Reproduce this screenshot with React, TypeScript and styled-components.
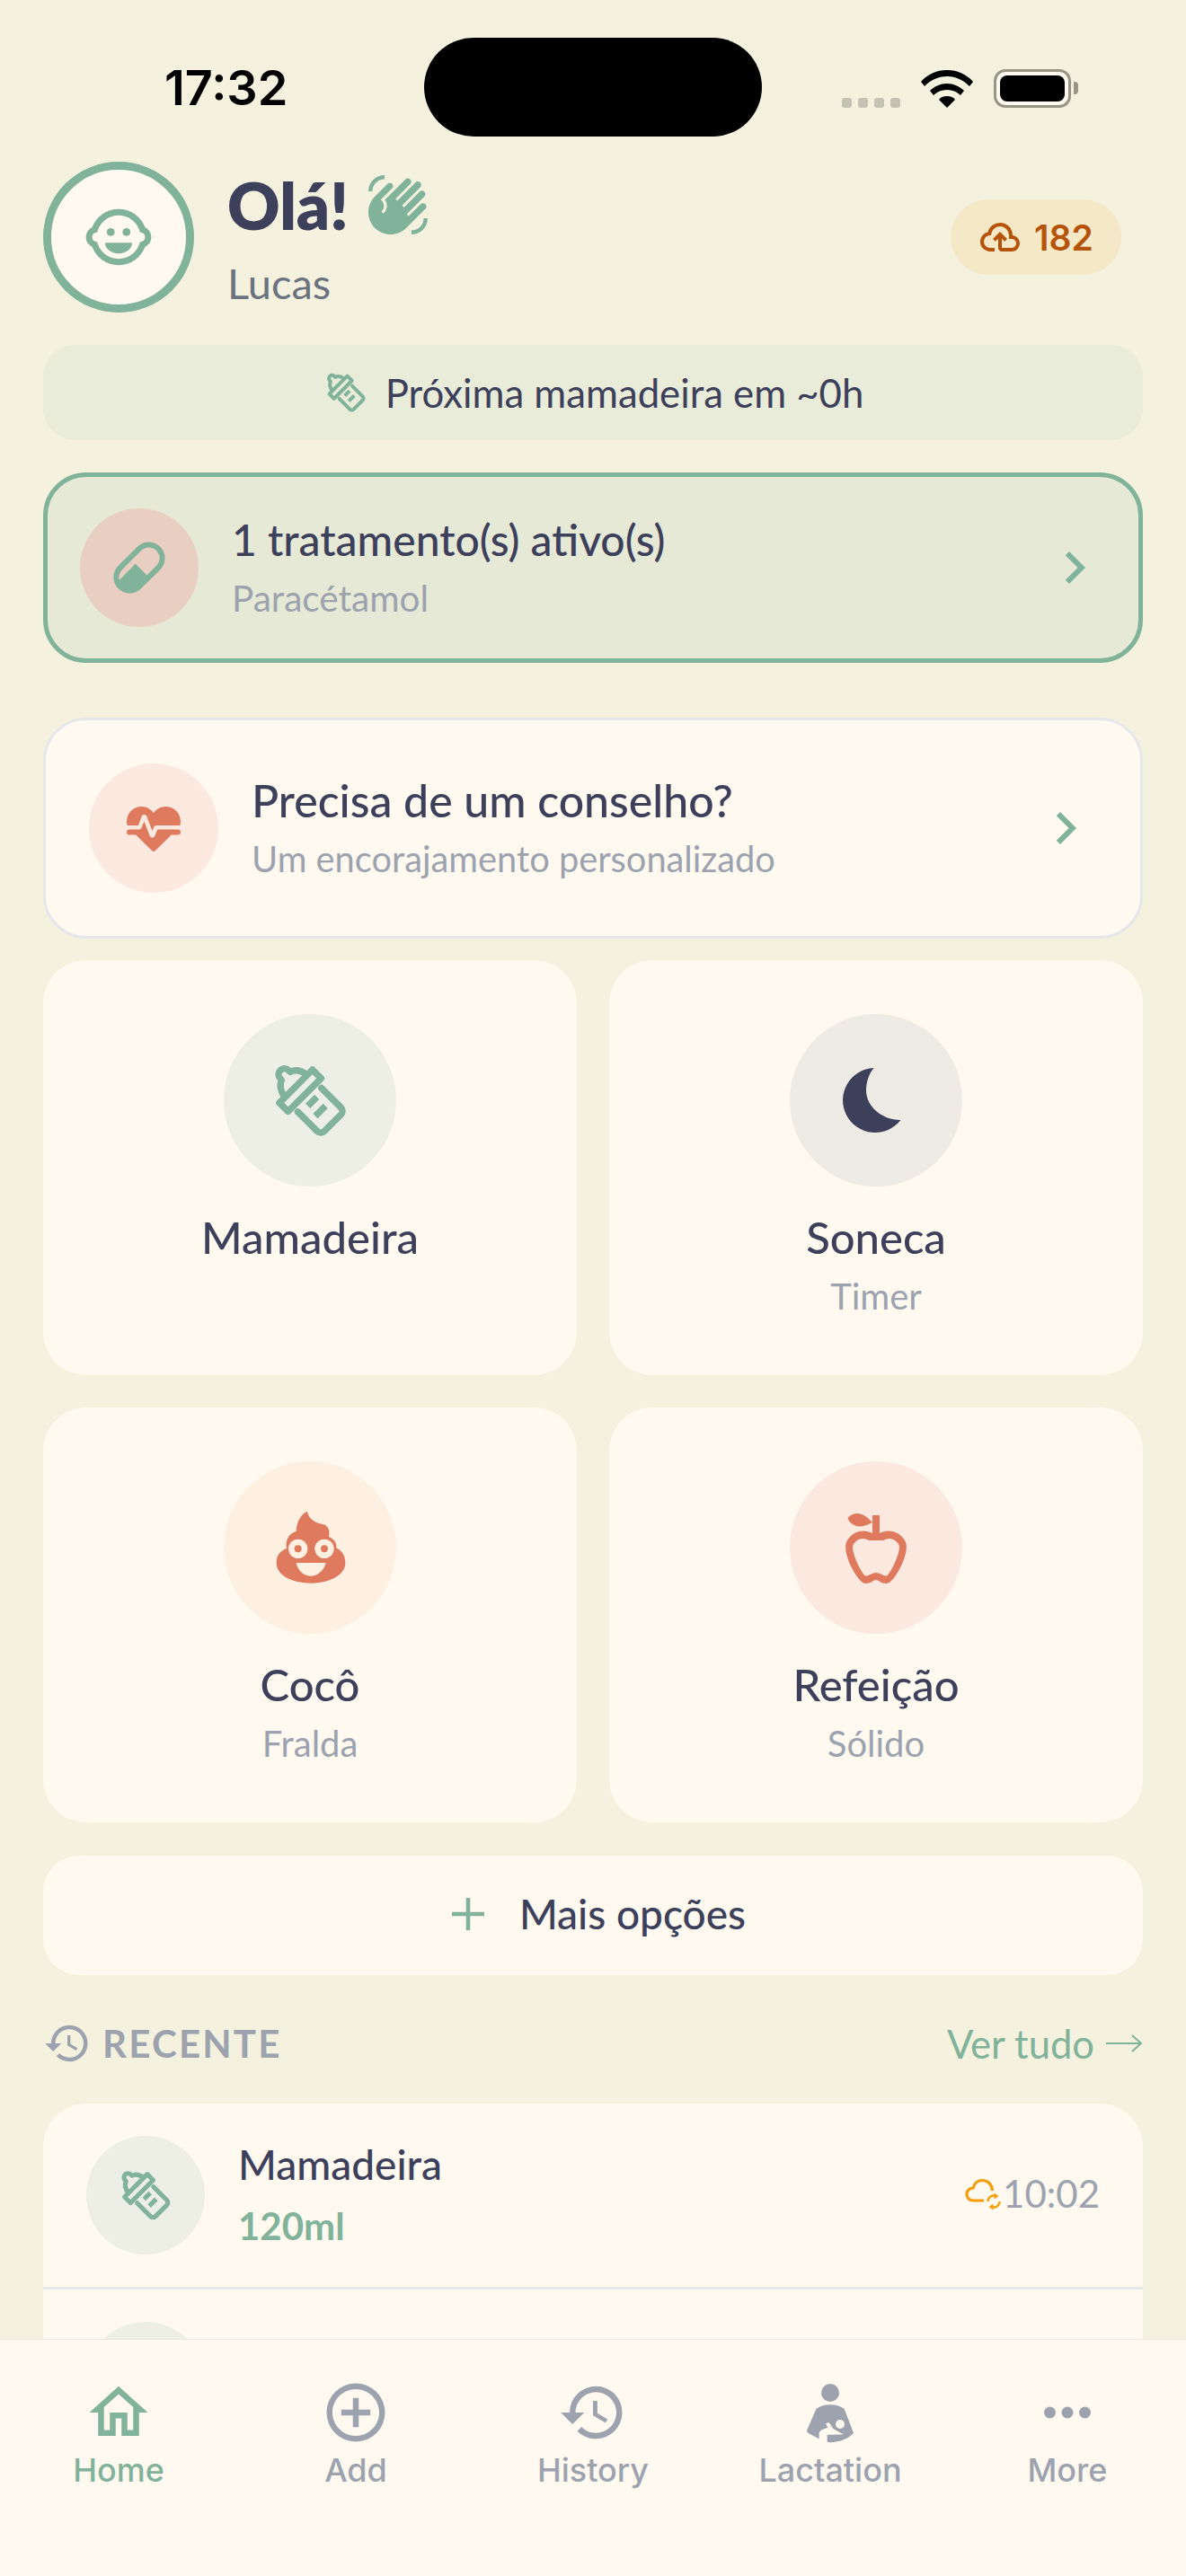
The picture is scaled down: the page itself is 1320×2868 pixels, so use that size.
import React from "react";
import styled, { createGlobalStyle } from "styled-components";

const GREEN = "#81b29a";
const DARK = "#3d405b";
const CORAL = "#e07a5f";
const GRAY = "#9ca3af";
const CARD = "#fff9f0";
const FONT = `"Lato", "Noto Sans", sans-serif`;

const GlobalStyle = createGlobalStyle`
  html, body {
    margin: 0;
    padding: 0;
    background: #f4f1de;
  }
  * { box-sizing: border-box; }
`;

// icones
const Icon: React.FC<{ size: number; color: string; d: string; evenodd?: boolean }> = ({ size, color, d, evenodd }) => (
  <svg width={size} height={size} viewBox="0 0 24 24" fill={color} fillRule={evenodd ? "evenodd" : "nonzero"}>
    <path d={d} />
  </svg>
);

const paths = {
  chevron: "M8.59,16.58L13.17,12L8.59,7.41L10,6L16,12L10,18L8.59,16.58Z",
  pill: "M4.22,11.29L11.29,4.22C13.64,1.88 17.43,1.88 19.78,4.22C22.12,6.56 22.12,10.36 19.78,12.71L12.71,19.78C10.36,22.12 6.56,22.12 4.22,19.78C1.88,17.43 1.88,13.64 4.22,11.29M5.64,12.71C4.59,13.75 4.24,15.24 4.6,16.57L10.59,10.59L14.83,14.83L18.36,11.29C19.93,9.73 19.93,7.2 18.36,5.64C16.8,4.07 14.27,4.07 12.71,5.64L5.64,12.71Z",
  heartPulse: "M7.5,4A5.5,5.5 0 0,0 2,9.5C2,10 2.09,10.5 2.22,11H6.3L7.57,7.63C7.87,6.83 9.05,6.75 9.43,7.63L11.5,13L12.09,11.58C12.22,11.25 12.57,11 13,11H21.78C21.91,10.5 22,10 22,9.5A5.5,5.5 0 0,0 16.5,4C14.64,4 13,4.93 12,6.34C11,4.93 9.36,4 7.5,4M3,12.5A1,1 0 0,0 2,13.5A1,1 0 0,0 3,14.5H5.44L11,20C12,20.9 12,20.9 13,20L18.56,14.5H21A1,1 0 0,0 22,13.5A1,1 0 0,0 21,12.5H13.4L12.47,14.8C12.07,15.81 10.92,15.67 10.55,14.83L8.5,9.5L7.54,11.83C7.39,12.21 7.05,12.5 6.6,12.5H3Z",
  apple: "M20,10C22,13 17,22 15,22C13,22 13,21 12,21C11,21 11,22 9,22C7,22 2,13 4,10C6,7 9,7 11,8V5C5.38,8.07 4.11,3.78 4.11,3.78C4.11,3.78 6.77,0.19 11,5V3H13V8C15,7 18,7 20,10ZM18.33 11.11C17.26 9.5 15.89 9 13.89 10H10.11C8.11 9 6.74 9.5 5.67 11.11C4.8 12.4 7.5 18.5 9 19.9C10 19.9 11 19 12 19C13 19 14 19.9 15 19.9C16.5 18.5 19.2 12.4 18.33 11.11Z",
  cloudUp: "M6.5 20Q4.22 20 2.61 18.43 1 16.85 1 14.58 1 12.63 2.17 11.1 3.35 9.57 5.25 9.15 5.88 6.85 7.75 5.43 9.63 4 12 4 14.93 4 16.96 6.04 19 8.07 19 11 20.73 11.2 21.86 12.5 23 13.78 23 15.5 23 17.38 21.69 18.69 20.38 20 18.5 20H13Q12.18 20 11.59 19.41 11 18.83 11 18V12.85L9.4 14.4L8 13L12 9L16 13L14.6 14.4L13 12.85V18H18.5Q19.55 18 20.27 17.27 21 16.55 21 15.5 21 14.45 20.27 13.73 19.55 13 18.5 13H17V11Q17 8.93 15.54 7.46 14.08 6 12 6 9.93 6 8.46 7.46 7 8.93 7 11H6.5Q5.05 11 4.03 12.03 3 13.05 3 14.5 3 15.95 4.03 17 5.05 18 6.5 18H9V20Z",
  hand: "M23 17C23 20.31 20.31 23 17 23V21.5C19.5 21.5 21.5 19.5 21.5 17H23M1 7C1 3.69 3.69 1 7 1V2.5C4.5 2.5 2.5 4.5 2.5 7H1M8 4.32L3.41 8.92C.19 12.14 .19 17.37 3.41 20.59S11.86 23.81 15.08 20.59L22.15 13.5C22.64 13.03 22.64 12.24 22.15 11.75C21.66 11.26 20.87 11.26 20.38 11.75L15.96 16.17L15.25 15.46L21.79 8.92C22.28 8.43 22.28 7.64 21.79 7.15S20.5 6.66 20 7.15L14.19 13L13.5 12.27L20.25 5.5C20.74 5 20.74 4.22 20.25 3.73S19 3.24 18.5 3.73L11.75 10.5L11.05 9.8L16.5 4.32C17 3.83 17 3.04 16.5 2.55S15.22 2.06 14.73 2.55L7.11 10.17C8.33 11.74 8.08 14 6.5 15.23L5.8 14.5C7 13.5 7.1 11.6 5.9 10.4L5.6 10.1L9.77 5.95C10.26 5.46 10.26 4.67 9.77 4.18S8.49 3.83 8 4.32Z",
  home: "M12 5.69L17 10.19V18H15V12H9V18H7V10.19L12 5.69M12 3L2 12H5V20H11V14H13V20H19V12H22",
  plusCircle: "M12,20C7.59,20 4,16.41 4,12C4,7.59 7.59,4 12,4C16.41,4 20,7.59 20,12C20,16.41 16.41,20 12,20M12,2A10,10 0 0,0 2,12A10,10 0 0,0 12,22A10,10 0 0,0 22,12A10,10 0 0,0 12,2M13,7H11V11H7V13H11V17H13V13H17V11H13V7Z",
  history: "M13.5,8H12V13L16.28,15.54L17,14.33L13.5,12.25V8M13,3A9,9 0 0,0 4,12H1L4.96,16.03L9,12H6A7,7 0 0,1 13,5A7,7 0 0,1 20,12A7,7 0 0,1 13,19C11.07,19 9.32,18.21 8.06,16.94L6.64,18.36C8.27,20 10.5,21 13,21A9,9 0 0,0 22,12A9,9 0 0,0 13,3",
  dots: "M16,12A2,2 0 0,1 18,10A2,2 0 0,1 20,12A2,2 0 0,1 18,14A2,2 0 0,1 16,12M10,12A2,2 0 0,1 12,10A2,2 0 0,1 14,12A2,2 0 0,1 12,14A2,2 0 0,1 10,12M4,12A2,2 0 0,1 6,10A2,2 0 0,1 8,12A2,2 0 0,1 6,14A2,2 0 0,1 4,12Z",
};

const Bottle: React.FC<{ size: number }> = ({ size }) => (
  <svg width={size} height={size} viewBox="0 0 24 24" fill="none" stroke={GREEN} strokeWidth={1.85} strokeLinejoin="round" strokeLinecap="round">
    <path d="M8.6 15.2L14 20.6a1.4 1.4 0 0 0 2 0L20.6 16a1.4 1.4 0 0 0 0-2L15.2 8.6" />
    <path d="M3.5 12.7L12.7 3.5L15.1 5.9L5.9 15.1Z" />
    <path d="M4.9 11C3.7 9.2 3.5 7.6 4.1 6.4L3.7 5.9A1.6 1.6 0 0 1 6.1 3.7L6.5 4.1C7.8 3.4 9.4 3.6 11 4.8" />
    <path d="M11.4 13.6L13.9 11.1M13.5 16.4L16.3 13.6" strokeLinecap="butt" />
  </svg>
);

const BabyFace: React.FC<{ size: number }> = ({ size }) => (
  <svg width={size} height={size} viewBox="0 0 24 24" fill={GREEN}>
    <path
      d="M4.4 9.6A8 8 0 0 1 19.6 9.6A2.5 2.5 0 0 1 19.6 14.4A8 8 0 0 1 4.4 14.4A2.5 2.5 0 0 1 4.4 9.6Z"
      fill="none"
      stroke={GREEN}
      strokeWidth={2}
    />
    <circle cx={9.5} cy={10.4} r={1.25} />
    <circle cx={14.5} cy={10.4} r={1.25} />
    <path d="M7.7 13.8H16.3A4.3 3.4 0 0 1 7.7 13.8Z" />
  </svg>
);

const Moon: React.FC<{ size: number }> = ({ size }) => (
  <svg width={size} height={size} viewBox="0 0 96 96" fill={DARK}>
    <path d="M45.5 12A36 36 0 1 0 75.5 70C55 70 37 55 37 37C37 28 40 19 45.5 12Z" />
  </svg>
);

const Poop: React.FC<{ size: number }> = ({ size }) => (
  <svg width={size} height={size} viewBox="0 0 288 288">
    <path
      fill={CORAL}
      d="M135 23C140 50 160 60 190 67C205 72 212 90 207 108C225 115 234 130 232 145C250 155 262 170 262 195C262 240 200 263 150 263C90 263 32 240 32 195C32 170 45 155 66 147C60 120 75 95 98 90C98 60 115 30 135 23Z"
    />
    <circle cx={104} cy={148} r={32} fill="#fdf0e0" />
    <circle cx={192} cy={148} r={32} fill="#fdf0e0" />
    <circle cx={104} cy={148} r={12} fill={CORAL} />
    <circle cx={192} cy={148} r={12} fill={CORAL} />
    <path fill="#fdf0e0" d="M98 195H197C190 225 165 239 147 239C125 239 105 225 98 195Z" />
  </svg>
);

const MotherNurse: React.FC<{ size: number }> = ({ size }) => (
  <svg width={size} height={size} viewBox="-9 -9 234 234">
    <circle cx={108} cy={42} r={30} fill={GRAY} />
    <path
      fill={GRAY}
      d="M108 82C88 82 72 87 61 96L31 166C29 171 31 175 36 177C60 190 90 208 108 208C140 206 170 195 186 176L155 96C144 87 128 82 108 82Z"
    />
    <path
      fill={CARD}
      d="M71 212V178C71 168 84 164 100 158L93 145L104 141L118 162L146 178L154 180C140 182 115 182 98 182V212Z"
    />
    <circle cx={141} cy={147} r={15} fill={CARD} />
  </svg>
);

const CloudSync = () => (
  <svg width={42} height={42} viewBox="0 0 42 42" fill="none" stroke="#f59e0b" strokeWidth={3.2}>
    <path d="M21 26H9C5 26 2 23 2 19C2 15 5 12 9 12C10.5 6.5 14.5 3.5 19.5 3.5C25.5 3.5 30 8 30.5 15" />
    <path d="M25.5 27A6.5 6.5 0 0 1 34.5 21M38.5 27A6.5 6.5 0 0 1 29.5 33" strokeWidth={2.4} />
    <path d="M32.5 17.5L37.5 21L32.5 24.5ZM31.5 36.5L26.5 33L31.5 29.5Z" fill="#f59e0b" stroke="none" />
  </svg>
);

const WifiGlyph = () => (
  <svg width={58} height={42} viewBox="0 0 58 42" fill="#000">
    <path d="M29 0C18 0 8 4 0 13L4 18C11 11 19 7 29 7S47 11 54 18L58 13C50 4 40 0 29 0Z" />
    <path d="M29 15C22 15 15 18 10 23L14 28C18 24 23 22 29 22S40 24 44 28L48 23C43 18 36 15 29 15Z" />
    <path d="M29 29C25 29 22 30 20 33L29 42L38 33C36 30 33 29 29 29Z" />
  </svg>
);

const Page = styled.div`
  width: 1320px;
  height: 2868px;
  display: flex;
  flex-direction: column;
  overflow: hidden;
  background: #f4f1de;
  font-family: ${FONT};
  color: ${DARK};
`;

const StatusBar = styled.div`
  height: 180px;
  flex: none;
  display: flex;
  align-items: flex-start;
  padding-top: 42px;
`;

const Clock = styled.div`
  width: 472px;
  padding: 26px 0 0 183px;
  font-family: "Inter", sans-serif;
  font-weight: 600;
  font-size: 54px;
  line-height: 60px;
  color: #000;
`;

const Island = styled.div`
  width: 376px;
  height: 110px;
  border-radius: 55px;
  background: #000;
`;

const StatusIcons = styled.div`
  display: flex;
  align-items: flex-end;
  padding: 35px 0 0 89px;
`;

const SignalDots = styled.div`
  display: flex;
  gap: 7px;
  margin-right: 23px;
`;

const SignalDot = styled.div`
  width: 11px;
  height: 11px;
  border-radius: 3px;
  background: #c4c2b2;
`;

const Battery = styled.div`
  width: 86px;
  height: 43px;
  margin-left: 23px;
  padding: 4px;
  border: 3px solid #979685;
  border-radius: 13px;
  background: #fff9f0;
  position: relative;

  &::after {
    content: "";
    position: absolute;
    right: -11px;
    top: 11px;
    width: 5px;
    height: 14px;
    border-radius: 0 4px 4px 0;
    background: #979685;
  }
`;

const BatteryFill = styled.div`
  height: 100%;
  border-radius: 8px;
  background: #000;
`;

const Content = styled.div`
  flex: 1;
  min-height: 0;
  overflow: hidden;
  padding: 0 48px;
  display: flex;
  flex-direction: column;
`;

const Header = styled.div`
  display: flex;
  align-items: center;
  height: 168px;
  flex: none;
`;

const Avatar = styled.div`
  width: 168px;
  height: 168px;
  flex: none;
  border-radius: 50%;
  border: 9px solid ${GREEN};
  background: ${CARD};
  display: flex;
  align-items: center;
  justify-content: center;
`;

const Greeting = styled.div`
  margin-left: 37px;
  flex: 1;
`;

const GreetingLine = styled.div`
  display: flex;
  align-items: center;
  gap: 19px;
  font-size: 72px;
  font-weight: 800;
  line-height: 90px;
`;

const BabyName = styled.div`
  font-size: 47px;
  line-height: 60px;
  margin-top: 12px;
  color: #6b7280;
`;

const SyncChip = styled.div`
  width: 190px;
  height: 84px;
  margin-right: 24px;
  border-radius: 42px;
  background: #f5e8c7;
  display: flex;
  align-items: center;
  justify-content: center;
  gap: 14px;
  font-family: "Inter", sans-serif;
  font-size: 39px;
  font-weight: 600;
  color: #b45309;
`;

const Banner = styled.div`
  margin-top: 36px;
  height: 106px;
  flex: none;
  border-radius: 36px;
  background: #e9ecd8;
  display: flex;
  align-items: center;
  justify-content: center;
  gap: 18px;
  font-size: 43.7px;
`;

const TreatmentCard = styled.div`
  margin-top: 36px;
  height: 212px;
  flex: none;
  border: 5px solid ${GREEN};
  border-radius: 48px;
  background: #e6e9d6;
  display: flex;
  align-items: center;
  padding: 0 35px 0 36px;
`;

const AdviceCard = styled.div`
  margin-top: 61px;
  height: 246px;
  flex: none;
  border: 3px solid #e5e7eb;
  border-radius: 48px;
  background: ${CARD};
  display: flex;
  align-items: center;
  padding: 0 47px 0 48px;
`;

const RoundIcon = styled.div<{ $size: number; $bg: string }>`
  width: ${(p) => p.$size}px;
  height: ${(p) => p.$size}px;
  flex: none;
  border-radius: 50%;
  background: ${(p) => p.$bg};
  display: flex;
  align-items: center;
  justify-content: center;
`;

const CardText = styled.div<{ $gap: number }>`
  flex: 1;
  margin-left: ${(p) => p.$gap}px;
`;

const CardTitle = styled.div<{ $size: number }>`
  font-size: ${(p) => p.$size}px;
  font-weight: 500;
  line-height: 60px;
`;

const CardSub = styled.div<{ $size: number }>`
  margin-top: 8px;
  font-size: ${(p) => p.$size}px;
  line-height: 54px;
  color: ${GRAY};
`;

const ActionGrid = styled.div`
  margin-top: 24px;
  flex: none;
  display: grid;
  grid-template-columns: 1fr 1fr;
  gap: 36px;
`;

const ActionCard = styled.div`
  height: 462px;
  border-radius: 48px;
  background: ${CARD};
  padding-top: 60px;
  display: flex;
  flex-direction: column;
  align-items: center;
`;

const ActionTitle = styled.div`
  margin-top: 23px;
  font-size: 49px;
  font-weight: 500;
  line-height: 66px;
`;

const ActionSub = styled.div`
  margin-top: 6px;
  font-size: 40px;
  line-height: 54px;
  color: ${GRAY};
`;

const MoreButton = styled.div`
  margin-top: 37px;
  height: 133px;
  flex: none;
  border-radius: 40px;
  background: ${CARD};
  display: flex;
  align-items: center;
  justify-content: center;
  gap: 36px;
  padding: 0 0 4px 10px;
  font-size: 46px;
  font-weight: 500;
`;

const SectionHead = styled.div`
  margin-top: 46px;
  height: 60px;
  flex: none;
  display: flex;
  align-items: center;
  justify-content: space-between;
`;

const SectionTitle = styled.div`
  display: flex;
  align-items: center;
  gap: 12px;
  font-size: 42px;
  font-weight: 700;
  letter-spacing: 2.2px;
  color: ${GRAY};
`;

const SeeAll = styled.div`
  display: flex;
  align-items: center;
  gap: 12px;
  font-size: 43.5px;
  color: ${GREEN};
`;

const RecentList = styled.div`
  margin-top: 37px;
  flex: none;
  border-radius: 48px;
  background: ${CARD};
`;

const RecentRow = styled.div<{ $divider?: boolean }>`
  display: flex;
  align-items: center;
  padding: 36px 48px;
  ${(p) => (p.$divider ? "border-bottom: 3px solid #e5e7eb;" : "")}
`;

const RecentTime = styled.div`
  display: flex;
  align-items: center;
  padding-bottom: 4px;
  font-size: 42px;
  color: ${GRAY};

  svg {
    margin-top: 6px;
  }
`;

const Amount = styled.div`
  font-size: 42px;
  font-weight: 700;
  line-height: 60px;
  margin-top: 8px;
  color: ${GREEN};
`;

const TabBar = styled.div`
  height: 264px;
  flex: none;
  background: ${CARD};
  border-top: 1.5px solid #e9e7df;
  display: grid;
  grid-template-columns: repeat(5, 1fr);
  padding-top: 41.5px;
`;

const Tab = styled.div<{ $active?: boolean }>`
  display: flex;
  flex-direction: column;
  align-items: center;
  font-family: "Inter", sans-serif;
  font-size: 36px;
  font-weight: 500;
  line-height: 44px;
  color: ${(p) => (p.$active ? GREEN : GRAY)};
`;

const TabIcon = styled.div`
  height: 78px;
  margin-bottom: 3px;
`;

const App: React.FC = () => {
  return (
    <Page>
      <GlobalStyle />
      <StatusBar>
        <Clock>17:32</Clock>
        <Island />
        <StatusIcons>
          <SignalDots>
            <SignalDot />
            <SignalDot />
            <SignalDot />
            <SignalDot />
          </SignalDots>
          <WifiGlyph />
          <Battery>
            <BatteryFill />
          </Battery>
        </StatusIcons>
      </StatusBar>

      <Content>
        <Header>
          <Avatar>
            <BabyFace size={84} />
          </Avatar>
          <Greeting>
            <GreetingLine>
              Olá! <Icon size={72} color={GREEN} d={paths.hand} />
            </GreetingLine>
            <BabyName>Lucas</BabyName>
          </Greeting>
          <SyncChip>
            <Icon size={48} color="#b45309" d={paths.cloudUp} />
            182
          </SyncChip>
        </Header>

        <Banner>
          <Bottle size={52} />
          Próxima mamadeira em ~0h
        </Banner>

        <TreatmentCard>
          <RoundIcon $size={132} $bg="#e9cfc1">
            <Icon size={72} color={GREEN} d={paths.pill} />
          </RoundIcon>
          <CardText $gap={37}>
            <CardTitle $size={48}>1 tratamento(s) ativo(s)</CardTitle>
            <CardSub $size={40.5}>Paracétamol</CardSub>
          </CardText>
          <Icon size={72} color={GREEN} d={paths.chevron} />
        </TreatmentCard>

        <AdviceCard>
          <RoundIcon $size={144} $bg="#fbe9df">
            <Icon size={72} color={CORAL} d={paths.heartPulse} />
          </RoundIcon>
          <CardText $gap={37}>
            <CardTitle $size={50}>Precisa de um conselho?</CardTitle>
            <CardSub $size={39.8}>Um encorajamento personalizado</CardSub>
          </CardText>
          <Icon size={72} color={GREEN} d={paths.chevron} />
        </AdviceCard>

        <ActionGrid>
          <ActionCard>
            <RoundIcon $size={192} $bg="#edefe5">
              <Bottle size={96} />
            </RoundIcon>
            <ActionTitle>Mamadeira</ActionTitle>
          </ActionCard>
          <ActionCard>
            <RoundIcon $size={192} $bg="#eeebe5">
              <Moon size={96} />
            </RoundIcon>
            <ActionTitle>Soneca</ActionTitle>
            <ActionSub>Timer</ActionSub>
          </ActionCard>
          <ActionCard>
            <RoundIcon $size={192} $bg="#fdf0e0">
              <Poop size={96} />
            </RoundIcon>
            <ActionTitle>Cocô</ActionTitle>
            <ActionSub>Fralda</ActionSub>
          </ActionCard>
          <ActionCard>
            <RoundIcon $size={192} $bg="#fbe9df">
              <Icon size={96} color={CORAL} d={paths.apple} evenodd />
            </RoundIcon>
            <ActionTitle>Refeição</ActionTitle>
            <ActionSub>Sólido</ActionSub>
          </ActionCard>
        </ActionGrid>

        <MoreButton>
          <svg width={42} height={42} viewBox="0 0 42 42" stroke={GREEN} strokeWidth={4.5}>
            <path d="M21 3V39M3 21H39" />
          </svg>
          Mais opções
        </MoreButton>

        <SectionHead>
          <SectionTitle>
            <Icon size={54} color={GRAY} d={paths.history} />
            RECENTE
          </SectionTitle>
          <SeeAll>
            Ver tudo
            <svg width={42} height={24} viewBox="0 0 42 24" fill="none" stroke={GREEN} strokeWidth={2}>
              <path d="M1 12H40M30 3L40 12L30 21" />
            </svg>
          </SeeAll>
        </SectionHead>

        <RecentList>
          <RecentRow $divider>
            <RoundIcon $size={132} $bg="#edefe5">
              <Bottle size={66} />
            </RoundIcon>
            <CardText $gap={37}>
              <CardTitle $size={46}>Mamadeira</CardTitle>
              <Amount>120ml</Amount>
            </CardText>
            <RecentTime>
              <CloudSync />
              10:02
            </RecentTime>
          </RecentRow>
          <RecentRow>
            <RoundIcon $size={132} $bg="#edefe5" />
          </RecentRow>
        </RecentList>
      </Content>

      <TabBar>
        <Tab $active>
          <TabIcon>
            <Icon size={78} color={GREEN} d={paths.home} />
          </TabIcon>
          Home
        </Tab>
        <Tab>
          <TabIcon>
            <Icon size={78} color={GRAY} d={paths.plusCircle} />
          </TabIcon>
          Add
        </Tab>
        <Tab>
          <TabIcon>
            <Icon size={78} color={GRAY} d={paths.history} />
          </TabIcon>
          History
        </Tab>
        <Tab>
          <TabIcon>
            <MotherNurse size={78} />
          </TabIcon>
          Lactation
        </Tab>
        <Tab>
          <TabIcon>
            <Icon size={78} color={GRAY} d={paths.dots} />
          </TabIcon>
          More
        </Tab>
      </TabBar>
    </Page>
  );
};

export default App;
